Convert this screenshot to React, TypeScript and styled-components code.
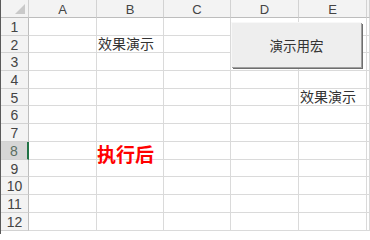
import React from 'react';
import styled, { createGlobalStyle } from 'styled-components';

const GlobalStyle = createGlobalStyle`
  html, body {
    margin: 0;
    padding: 0;
    background: #ffffff;
    overflow: hidden;
  }
  * {
    box-sizing: border-box;
  }
`;

const columns = ['A', 'B', 'C', 'D', 'E', ''];
const colWidths = [28, 68, 67, 67, 68, 68];
// header row + 12 sheet rows
const rowHeights = [18, 18, 17, 18, 18, 17, 18, 18, 18, 17, 18, 18, 18];
const selectedRow = 8;

type CellData = { text: string; variant?: 'plain' | 'alert' };

const cells: Record<string, CellData> = {
  B2: { text: '效果演示' },
  E5: { text: '效果演示' },
  B8: { text: '执行后', variant: 'alert' },
};

const Sheet = styled.div`
  position: relative;
  width: 370px;
  height: 234px;
  overflow: hidden;
  border-left: 1px solid #5a5a5a;
  display: grid;
  grid-template-columns: ${colWidths.map((w) => `${w}px`).join(' ')} 1fr;
  grid-template-rows: ${rowHeights.map((h) => `${h}px`).join(' ')} 1fr;
  font-family: "Noto Sans CJK SC", "Liberation Sans", sans-serif;
`;

const Corner = styled.div`
  position: relative;
  background: #f3f3f3;
  border-right: 1px solid #cfcfcf;
  border-bottom: 1px solid #bdbdbd;

  &::after {
    content: '';
    position: absolute;
    right: 3px;
    bottom: 3px;
    width: 0;
    height: 0;
    border-left: 10px solid transparent;
    border-bottom: 10px solid #c9c9c9;
  }
`;

const ColHeader = styled.div`
  display: flex;
  align-items: center;
  justify-content: center;
  background: #f3f3f3;
  border-right: 1px solid #d2d2d2;
  border-bottom: 1px solid #bdbdbd;
  color: #444444;
  font-family: "Liberation Sans", Arial, sans-serif;
  font-size: 13px;
  line-height: 1;
  padding-top: 1px;
`;

const RowHeader = styled.div<{ $selected: boolean }>`
  display: flex;
  align-items: center;
  justify-content: center;
  background: ${({ $selected }) => ($selected ? '#d6d6d6' : '#f3f3f3')};
  border-right: ${({ $selected }) => ($selected ? '2px solid #217346' : '1px solid #bdbdbd')};
  border-bottom: 1px solid #d2d2d2;
  color: ${({ $selected }) => ($selected ? '#5a6e61' : '#444444')};
  font-family: "Liberation Sans", Arial, sans-serif;
  font-size: 14px;
  line-height: 1;
  padding-top: 1px;
`;

const Filler = styled.div`
  grid-column: 1 / -1;
`;

const Cell = styled.div`
  position: relative;
  display: flex;
  align-items: flex-end;
  border-right: 1px solid #dadada;
  border-bottom: 1px solid #dadada;
  overflow: visible;
`;

const CellText = styled.span<{ $variant: 'plain' | 'alert' }>`
  position: relative;
  z-index: 1;
  white-space: nowrap;
  padding-left: ${({ $variant }) => ($variant === 'alert' ? '0px' : '1px')};
  color: ${({ $variant }) => ($variant === 'alert' ? '#ff0000' : '#333333')};
  font-size: ${({ $variant }) => ($variant === 'alert' ? '19px' : '14px')};
  font-weight: ${({ $variant }) => ($variant === 'alert' ? 700 : 400)};
  line-height: ${({ $variant }) => ($variant === 'alert' ? '20px' : '17px')};
  margin-bottom: ${({ $variant }) => ($variant === 'alert' ? '-5px' : '0')};
`;

const MacroButton = styled.button`
  position: absolute;
  left: 230px;
  top: 22px;
  width: 130px;
  height: 45px;
  margin: 0;
  padding: 0;
  background: #eeeeee;
  border: none;
  border-top: 1px solid #f8f8f8;
  border-left: 1px solid #f8f8f8;
  box-shadow: 1px 1px 0 #a0a0a0, 2px 2px 0 #6e6e6e;
  color: #333333;
  font-family: "Noto Sans CJK SC", "Liberation Sans", sans-serif;
  font-size: 13.5px;
  cursor: pointer;
`;

const App = () => {
  const rows = rowHeights.slice(1).map((_, i) => i + 1);

  return (
    <>
      <GlobalStyle />
      <Sheet>
        <Corner />
        {columns.map((c, i) => (
          <ColHeader key={`h${i}`}>{c}</ColHeader>
        ))}
        {rows.map((r) => (
          <React.Fragment key={r}>
            <RowHeader $selected={r === selectedRow}>{r}</RowHeader>
            {columns.map((c, i) => {
              const data = cells[`${c}${r}`];
              return (
                <Cell key={`${r}-${i}`}>
                  {data && <CellText $variant={data.variant ?? 'plain'}>{data.text}</CellText>}
                </Cell>
              );
            })}
          </React.Fragment>
        ))}
        <Filler />
        <MacroButton>演示用宏</MacroButton>
      </Sheet>
    </>
  );
};

export default App;
